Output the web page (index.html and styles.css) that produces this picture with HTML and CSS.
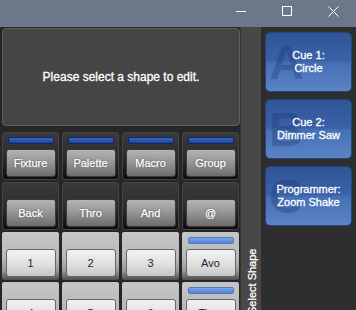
FILE: index.html
```html
<!DOCTYPE html>
<html lang="en">
<head>
  <meta charset="UTF-8">
  <title>Shape Editor</title>
  <link rel="stylesheet" href="styles.css">
</head>
<body>

  <!-- Window title bar -->
  <div class="titlebar">
    <div class="winctl">
      <svg width="10" height="10" viewBox="0 0 10 10"><line x1="0" y1="5.5" x2="10" y2="5.5" stroke="#fff" stroke-width="1"/></svg>
    </div>
    <div class="winctl">
      <svg width="10" height="10" viewBox="0 0 10 10"><rect x="0.5" y="0.5" width="9" height="9" fill="none" stroke="#fff" stroke-width="1"/></svg>
    </div>
    <div class="winctl">
      <svg width="11" height="11" viewBox="0 0 11 11"><path d="M0.5 0.5 L10.5 10.5 M10.5 0.5 L0.5 10.5" stroke="#fff" stroke-width="1"/></svg>
    </div>
  </div>

  <div class="app">

    <!-- Editor + keypad -->
    <div class="left">
      <div class="message">Please select a shape to edit.</div>

      <div class="keys">
        <div class="cell dark"><span class="led"></span><button class="key">Fixture</button></div>
        <div class="cell dark"><span class="led"></span><button class="key">Palette</button></div>
        <div class="cell dark"><span class="led"></span><button class="key">Macro</button></div>
        <div class="cell dark"><span class="led"></span><button class="key">Group</button></div>

        <div class="cell dark"><span class="led off"></span><button class="key">Back</button></div>
        <div class="cell dark"><span class="led off"></span><button class="key">Thro</button></div>
        <div class="cell dark"><span class="led off"></span><button class="key">And</button></div>
        <div class="cell dark"><span class="led off"></span><button class="key">@</button></div>

        <div class="cell light"><span class="led off"></span><button class="key">1</button></div>
        <div class="cell light"><span class="led off"></span><button class="key">2</button></div>
        <div class="cell light"><span class="led off"></span><button class="key">3</button></div>
        <div class="cell light"><span class="led"></span><button class="key">Avo</button></div>

        <div class="cell light"><span class="led off"></span><button class="key">4</button></div>
        <div class="cell light"><span class="led off"></span><button class="key">5</button></div>
        <div class="cell light"><span class="led off"></span><button class="key">6</button></div>
        <div class="cell light"><span class="led"></span><button class="key">Time</button></div>
      </div>
    </div>

    <!-- Side tab -->
    <div class="tab"><span>Select Shape</span></div>

    <!-- Cue list -->
    <div class="cues">
      <div class="cue"><span class="letter">A</span><span class="label">Cue 1:<br>Circle</span></div>
      <div class="cue"><span class="letter">B</span><span class="label">Cue 2:<br>Dimmer Saw</span></div>
      <div class="cue"><span class="letter">C</span><span class="label">Programmer:<br>Zoom Shake</span></div>
    </div>

  </div>

</body>
</html>
```

FILE: styles.css
```css
body {
  margin: 0;
  padding: 0;
  font-family: "Liberation Sans", Arial, sans-serif;
  background-color: #2b2b2b;
  color: #fff;
  overflow: hidden;
}

/* Title bar */
.titlebar {
  height: 27px;
  background-color: #6a788a;
  display: flex;
  justify-content: flex-end;
  align-items: flex-start;
}

.winctl {
  width: 46px;
  height: 22px;
  display: flex;
  align-items: center;
  justify-content: center;
}

.winctl svg {
  display: block;
}

/* Main area */
.app {
  display: flex;
  height: 520px;
}

.left {
  width: 238px;
  padding: 1px 0 0 2px;
  background-color: #262626;
}

.message {
  height: 96px;
  display: flex;
  align-items: center;
  justify-content: center;
  background-color: #454545;
  border: 1px solid #5e5e5e;
  border-radius: 4px;
  font-size: 12px;
  color: #fff;
  -webkit-text-stroke: 0.3px #fff;
}

.keys {
  margin-top: 6px;
  display: grid;
  grid-template-columns: repeat(4, 57px);
  grid-auto-rows: 48px;
  column-gap: 3px;
  row-gap: 2px;
}

.cell {
  display: flex;
  flex-direction: column;
  align-items: center;
  padding-top: 5px;
  box-sizing: border-box;
  border-radius: 3px;
}

.cell.dark {
  background: linear-gradient(#3a3a3a, #2c2c2c 55%, #0d0d0d);
  border: 1px solid #444;
  padding-top: 4px;
}

.cell.light {
  background: linear-gradient(#c6c6c6, #b9b9b9 55%, #9a9a9a 80%, #4e4e4e);
  border-radius: 2px;
}

.led {
  width: 46px;
  height: 7px;
  box-sizing: border-box;
  border-radius: 2px;
  border: 1px solid #13285a;
  background: linear-gradient(#3566c4, #1f4496);
}

.cell.light .led {
  border-color: #5478b8;
  background: linear-gradient(#7aa6ec, #5483d6);
}

.led.off {
  visibility: hidden;
}

.key {
  margin-top: 5px;
  width: 50px;
  height: 28px;
  padding: 0;
  border-radius: 3px;
  font-family: "Liberation Sans", Arial, sans-serif;
  font-size: 11px;
}

.dark .key {
  border: 1px solid #3a3a3a;
  background: linear-gradient(#b4b4b4, #949494 50%, #6c6c6c);
  color: #fff;
  text-shadow: 0 0 2px rgba(0, 0, 0, 0.6);
  -webkit-text-stroke: 0.25px #fff;
}

.light .key {
  border: 1px solid #666;
  background: linear-gradient(#f2f2f2, #e0e0e0 55%, #c6c6c6);
  color: #1e1e3a;
}

/* Vertical tab */
.tab {
  width: 21px;
  background-color: #484848;
  border-left: 1px solid #333;
  box-sizing: border-box;
  display: flex;
  justify-content: center;
  padding-top: 222px;
}

.tab span {
  writing-mode: vertical-rl;
  transform: rotate(180deg);
  font-size: 11px;
  line-height: 13px;
  height: 70px;
  text-align: right;
  margin-left: 3px;
  color: #fff;
  -webkit-text-stroke: 0.25px #fff;
}

/* Cues */
.cues {
  flex: 1;
  background-color: #2e2e2e;
  padding: 5px 4px;
  display: flex;
  flex-direction: column;
  gap: 7px;
}

.cue {
  position: relative;
  height: 60px;
  box-sizing: border-box;
  border: 1px solid #23447e;
  border-radius: 5px;
  background: linear-gradient(#2f5597, #3a62a8 48%, #4670b5 52%, #5b84c5);
  display: flex;
  align-items: center;
  justify-content: center;
  overflow: hidden;
}

.letter {
  position: absolute;
  left: 3px;
  top: 6px;
  font-size: 48px;
  line-height: 48px;
  font-weight: bold;
  color: rgba(30, 55, 110, 0.35);
}

.label {
  position: relative;
  text-align: center;
  font-size: 11px;
  line-height: 13px;
  color: #fff;
  -webkit-text-stroke: 0.3px #fff;
}
```
